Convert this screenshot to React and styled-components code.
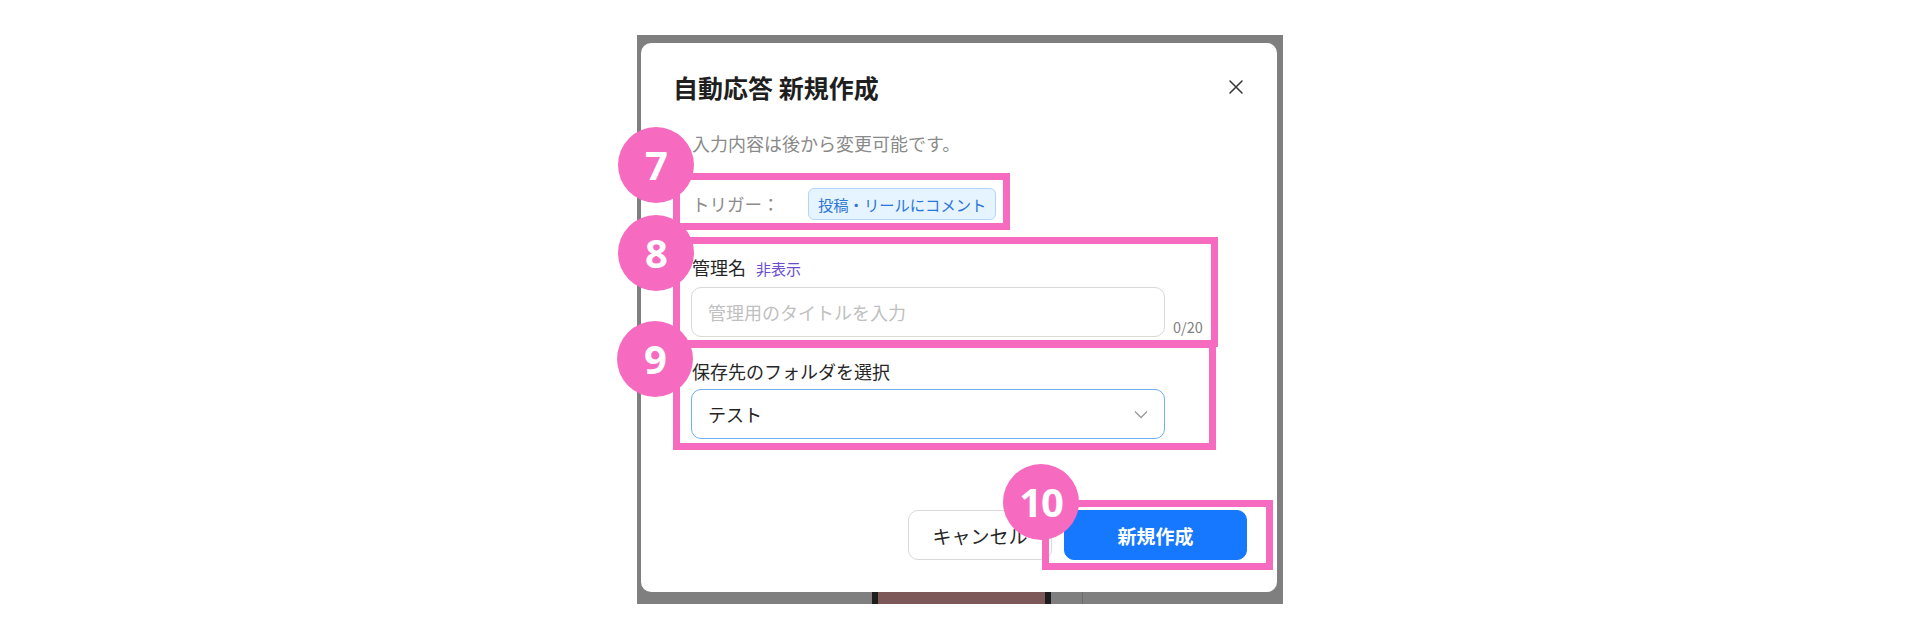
import React from 'react';
import styled, { createGlobalStyle } from 'styled-components';

const PINK = '#f66bc0';

const GlobalStyle = createGlobalStyle`
  html, body {
    margin: 0;
    padding: 0;
    background: #fff;
  }
  body {
    font-family: "Noto Sans CJK JP", "Noto Sans", sans-serif;
    color: #222;
  }
`;

const Page = styled.div`
  width: 1920px;
  height: 640px;
  display: flex;
  justify-content: center;
  padding-top: 35px;
  box-sizing: border-box;
`;

const Backdrop = styled.div`
  width: 646px;
  height: 569px;
  background: #7f7f7f;
  display: flex;
  flex-direction: column;
  padding: 8px 0 0 4px;
  box-sizing: border-box;
`;

const Peek = styled.div`
  display: flex;
  height: 12px;
  margin-left: -4px;
`;

const PhoneEdge = styled.div`
  margin-left: 235px;
  width: 179px;
  background: #1d1d1d;
  padding: 0 6px;
  box-sizing: border-box;

  &:before {
    content: " ";
    display: block;
    height: 100%;
    background: #7d5858;
  }
`;

const PeekLine = styled.div`
  margin-left: 31px;
  width: 1px;
  background: #6c6c6c;
`;

const Modal = styled.div`
  position: relative;
  width: 636px;
  height: 549px;
  background: #fff;
  border-radius: 10px;
  display: flex;
  flex-direction: column;
  box-sizing: border-box;
`;

const Header = styled.div`
  display: flex;
  justify-content: space-between;
  align-items: center;
  padding: 27px 33px 0 32px;
`;

const Title = styled.h2`
  margin: 0;
  font-size: 25px;
  line-height: 34px;
  font-weight: 700;
  color: #1f1f1f;
`;

const Close = styled.button`
  border: 0;
  background: none;
  padding: 0;
  width: 16px;
  height: 16px;
  display: flex;
  cursor: pointer;
`;

const Body = styled.div`
  display: flex;
  flex-direction: column;
  align-items: flex-start;
  padding-left: 50px;
  font-size: 17.5px;
  line-height: 24px;
`;

const Hint = styled.p`
  margin: 27px 0 0 1px;
  font-size: 18px;
  color: #8a8a8a;
`;

const TriggerRow = styled.div`
  display: flex;
  align-items: center;
  height: 32px;
  margin-top: 33px;
`;

const TriggerLabel = styled.span`
  width: 116px;
  padding-left: 1px;
  color: #8c8c8c;
`;

const Tag = styled.span`
  height: 32px;
  display: flex;
  align-items: center;
  padding: 0 9px;
  font-size: 15.3px;
  color: #2b76d6;
  background: #e6f4ff;
  border: 1px solid #b3d6f8;
  border-radius: 6px;
  box-sizing: border-box;
`;

const FieldLabel = styled.div`
  display: flex;
  align-items: baseline;
  gap: 10px;
  margin-top: ${p => p.$gap}px;
  padding-left: 1px;
  font-size: 18px;
  color: #262626;
`;

const Toggle = styled.span`
  font-size: 15px;
  color: #6a4cd3;
`;

const InputRow = styled.div`
  display: flex;
  align-items: flex-end;
  margin-top: 6px;
`;

const TextInput = styled.input`
  width: 474px;
  height: 50px;
  box-sizing: border-box;
  border: 1px solid #d9d9d9;
  border-radius: 10px;
  padding: 0 16px;
  font-family: inherit;
  font-size: 18px;
  outline: none;

  &::placeholder {
    color: #c0c0c0;
  }
`;

const Counter = styled.span`
  margin-left: 8px;
  font-size: 14.5px;
  line-height: 20px;
  color: #808080;
`;

const Select = styled.div`
  width: 474px;
  height: 50px;
  margin-top: 6px;
  box-sizing: border-box;
  border: 1px solid #6fb0f5;
  border-radius: 10px;
  padding: 0 16px 0 16px;
  display: flex;
  align-items: center;
  justify-content: space-between;
  font-size: 18px;
  color: #222;
`;

const Footer = styled.div`
  margin-top: auto;
  display: flex;
  justify-content: flex-end;
  gap: 12px;
  padding: 0 30px 32px 0;
`;

const Button = styled.button`
  height: 50px;
  width: ${p => p.$w}px;
  border-radius: 10px;
  font-family: inherit;
  font-size: 19px;
  font-weight: ${p => (p.$primary ? 700 : 400)};
  color: ${p => (p.$primary ? '#fff' : '#262626')};
  background: ${p => (p.$primary ? '#1677ff' : '#fff')};
  border: 1px solid ${p => (p.$primary ? '#1677ff' : '#d9d9d9')};
  cursor: pointer;
`;

const Frame = styled.div`
  position: absolute;
  left: ${p => p.$x}px;
  top: ${p => p.$y}px;
  width: ${p => p.$w}px;
  height: ${p => p.$h}px;
  border: 7px solid ${PINK};
  box-sizing: border-box;
  pointer-events: none;
`;

const Badge = styled.div`
  position: absolute;
  left: ${p => p.$cx - 38}px;
  top: ${p => p.$cy - 38}px;
  width: 76px;
  height: 76px;
  border-radius: 50%;
  background: ${PINK};
  color: #fff;
  display: flex;
  align-items: center;
  justify-content: center;
  font-family: "Open Sans", "Lato", sans-serif;
  font-weight: 700;
  font-size: 40px;
  line-height: 1;
  letter-spacing: -1px;
`;

const frames = [
  { x: 32, y: 130, w: 337, h: 57 },
  { x: 32, y: 194, w: 545, h: 110 },
  { x: 32, y: 298, w: 543, h: 109 },
  { x: 401, y: 457, w: 231, h: 70 },
];

const badges = [
  { n: 7, cx: 15, cy: 122 },
  { n: 8, cx: 15, cy: 210 },
  { n: 9, cx: 14, cy: 316 },
  { n: 10, cx: 400, cy: 459 },
];

const CloseIcon = () => (
  <svg width="16" height="16" viewBox="0 0 16 16">
    <path d="M2 2 L14 14 M14 2 L2 14" stroke="#3a3a3a" strokeWidth="1.6" strokeLinecap="round" />
  </svg>
);

const Chevron = () => (
  <svg width="14" height="9" viewBox="0 0 14 9">
    <polyline points="1,1.5 7,7.5 13,1.5" fill="none" stroke="#9a9a9a" strokeWidth="1.3" />
  </svg>
);

export default function App() {
  return (
    <>
      <GlobalStyle />
      <Page>
        <Backdrop>
          <Modal>
            <Header>
              <Title>自動応答 新規作成</Title>
              <Close aria-label="close"><CloseIcon /></Close>
            </Header>
            <Body>
              <Hint>入力内容は後から変更可能です。</Hint>
              <TriggerRow>
                <TriggerLabel>トリガー：</TriggerLabel>
                <Tag>投稿・リールにコメント</Tag>
              </TriggerRow>
              <FieldLabel $gap={35}>
                管理名<Toggle>非表示</Toggle>
              </FieldLabel>
              <InputRow>
                <TextInput placeholder="管理用のタイトルを入力" />
                <Counter>0/20</Counter>
              </InputRow>
              <FieldLabel $gap={22}>保存先のフォルダを選択</FieldLabel>
              <Select>
                <span>テスト</span>
                <Chevron />
              </Select>
            </Body>
            <Footer>
              <Button $w={144}>キャンセル</Button>
              <Button $w={183} $primary>新規作成</Button>
            </Footer>
            {frames.map((f, i) => (
              <Frame key={i} $x={f.x} $y={f.y} $w={f.w} $h={f.h} />
            ))}
            {badges.map(b => (
              <Badge key={b.n} $cx={b.cx} $cy={b.cy}>{b.n}</Badge>
            ))}
          </Modal>
          <Peek>
            <PhoneEdge />
            <PeekLine />
          </Peek>
        </Backdrop>
      </Page>
    </>
  );
}
